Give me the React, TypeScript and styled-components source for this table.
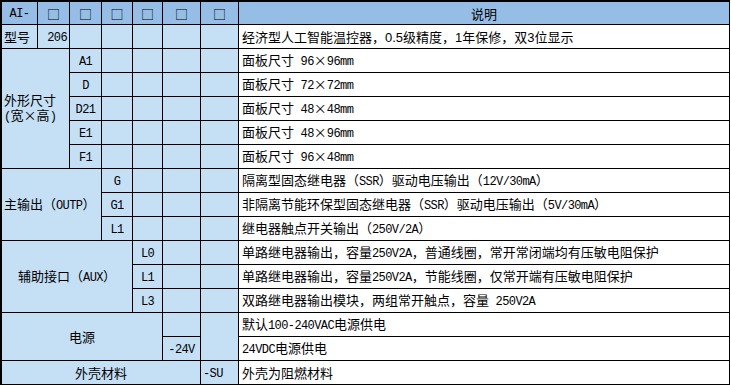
import React from 'react';
import styled, { createGlobalStyle } from 'styled-components';

type Tone = 'head' | 'blue' | 'white';
type Align = 'left' | 'center' | 'right';

const tones: Record<Tone, string> = {
  head: '#95bde6',
  blue: '#c5dff5',
  white: '#ffffff',
};

const GlobalStyle = createGlobalStyle`
  body {
    margin: 0;
    background: #fff;
    font-family: "Noto Sans CJK SC", "Noto Sans", sans-serif;
  }
`;

const Sheet = styled.div`
  display: grid;
  grid-template-columns: 35px 31px 31px 30px 29px 37px 37px 490px;
  grid-template-rows: 22px repeat(15, 23px);
  gap: 1px;
  padding: 2px 1px 1px 2px;
  width: max-content;
  background: #000;
`;

const Cell = styled.div<{
  $c: number;
  $r: number;
  $cs: number;
  $rs: number;
  $tone: Tone;
  $align: Align;
}>`
  grid-column: ${p => p.$c} / span ${p => p.$cs};
  grid-row: ${p => p.$r} / span ${p => p.$rs};
  display: flex;
  align-items: center;
  justify-content: ${p =>
    p.$align === 'left' ? 'flex-start' : p.$align === 'right' ? 'flex-end' : 'center'};
  padding: 0 ${p => (p.$align === 'center' ? 0 : p.$tone === 'white' ? 3 : 2)}px;
  background: ${p => tones[p.$tone]};
  color: #000;
  font-size: 13px;
  line-height: 15px;
  overflow: hidden;
`;

const Text = styled.span`
  white-space: pre;
`;

const Latin = styled.span<{ $sans?: boolean }>`
  font-family: ${p => (p.$sans ? '"Liberation Sans", sans-serif' : '"Liberation Mono", monospace')};
  font-size: ${p => (p.$sans ? 13 : 12)}px;
  letter-spacing: ${p => (p.$sans ? 0 : -0.6)}px;
`;

type CellSpec = {
  c: number;
  r: number;
  cs?: number;
  rs?: number;
  tone?: Tone;
  align?: Align;
  text?: string;
  sans?: boolean;
};

// ascii runs get the narrow serif mono face, like the sheet's song-ti latin
const runs = (text: string, sans?: boolean) =>
  text
    .split(/([\x20-\x7e]+)/)
    .filter(Boolean)
    .map((part, i) =>
      /^[\x20-\x7e]+$/.test(part) ? (
        <Latin key={i} $sans={sans}>
          {part}
        </Latin>
      ) : (
        part
      )
    );

const descriptions = [
  '经济型人工智能温控器，0.5级精度，1年保修，双3位显示',
  '面板尺寸 96×96mm',
  '面板尺寸 72×72mm',
  '面板尺寸 48×48mm',
  '面板尺寸 48×96mm',
  '面板尺寸 96×48mm',
  '隔离型固态继电器（SSR）驱动电压输出（12V/30mA）',
  '非隔离节能环保型固态继电器（SSR）驱动电压输出（5V/30mA）',
  '继电器触点开关输出（250V/2A）',
  '单路继电器输出，容量250V2A，普通线圈，常开常闭端均有压敏电阻保护',
  '单路继电器输出，容量250V2A，节能线圈，仅常开端有压敏电阻保护',
  '双路继电器输出模块，两组常开触点，容量 250V2A',
  '默认100-240VAC电源供电',
  '24VDC电源供电',
  '外壳为阻燃材料',
];

const buildCells = (): CellSpec[] => {
  const cells: CellSpec[] = [];
  const empties = (r: number, from: number, to: number) => {
    for (let c = from; c <= to; c++) cells.push({ c, r });
  };

  // header
  cells.push({ c: 1, r: 1, tone: 'head', text: 'AI-' });
  for (let c = 2; c <= 7; c++) cells.push({ c, r: 1, tone: 'head', text: '□' });
  cells.push({ c: 8, r: 1, tone: 'head', text: '说明' });

  // model
  cells.push({ c: 1, r: 2, align: 'left', text: '型号' });
  cells.push({ c: 2, r: 2, align: 'right', text: '206' });
  empties(2, 3, 7);

  // size
  cells.push({ c: 1, r: 3, cs: 2, rs: 5, align: 'left', text: '外形尺寸\n(宽×高)' });
  ['A1', 'D', 'D21', 'E1', 'F1'].forEach((code, i) => {
    cells.push({ c: 3, r: 3 + i, text: code });
    empties(3 + i, 4, 7);
  });

  // main output
  cells.push({ c: 1, r: 8, cs: 3, rs: 3, align: 'left', text: '主输出（OUTP）' });
  ['G', 'G1', 'L1'].forEach((code, i) => {
    cells.push({ c: 4, r: 8 + i, text: code });
    empties(8 + i, 5, 7);
  });

  // aux
  cells.push({ c: 1, r: 11, cs: 4, rs: 3, text: '辅助接口（AUX）' });
  ['L0', 'L1', 'L3'].forEach((code, i) => {
    cells.push({ c: 5, r: 11 + i, text: code });
    empties(11 + i, 6, 7);
  });

  // power
  cells.push({ c: 1, r: 14, cs: 5, rs: 2, text: '电源' });
  cells.push({ c: 6, r: 14 });
  cells.push({ c: 6, r: 15, text: '-24V' });
  cells.push({ c: 7, r: 14, rs: 2 });

  // shell
  cells.push({ c: 1, r: 16, cs: 6, text: '外壳材料' });
  cells.push({ c: 7, r: 16, align: 'left', text: '-SU' });

  descriptions.forEach((text, i) => {
    cells.push({ c: 8, r: 2 + i, tone: 'white', align: 'left', text, sans: i === 0 });
  });

  return cells;
};

const cells = buildCells();

const App: React.FC = () => (
  <>
    <GlobalStyle />
    <Sheet>
      {cells.map(cell => (
        <Cell
          key={`${cell.c}-${cell.r}`}
          $c={cell.c}
          $r={cell.r}
          $cs={cell.cs ?? 1}
          $rs={cell.rs ?? 1}
          $tone={cell.tone ?? 'blue'}
          $align={cell.align ?? 'center'}
        >
          {cell.text && <Text>{runs(cell.text, cell.sans)}</Text>}
        </Cell>
      ))}
    </Sheet>
  </>
);

export default App;
